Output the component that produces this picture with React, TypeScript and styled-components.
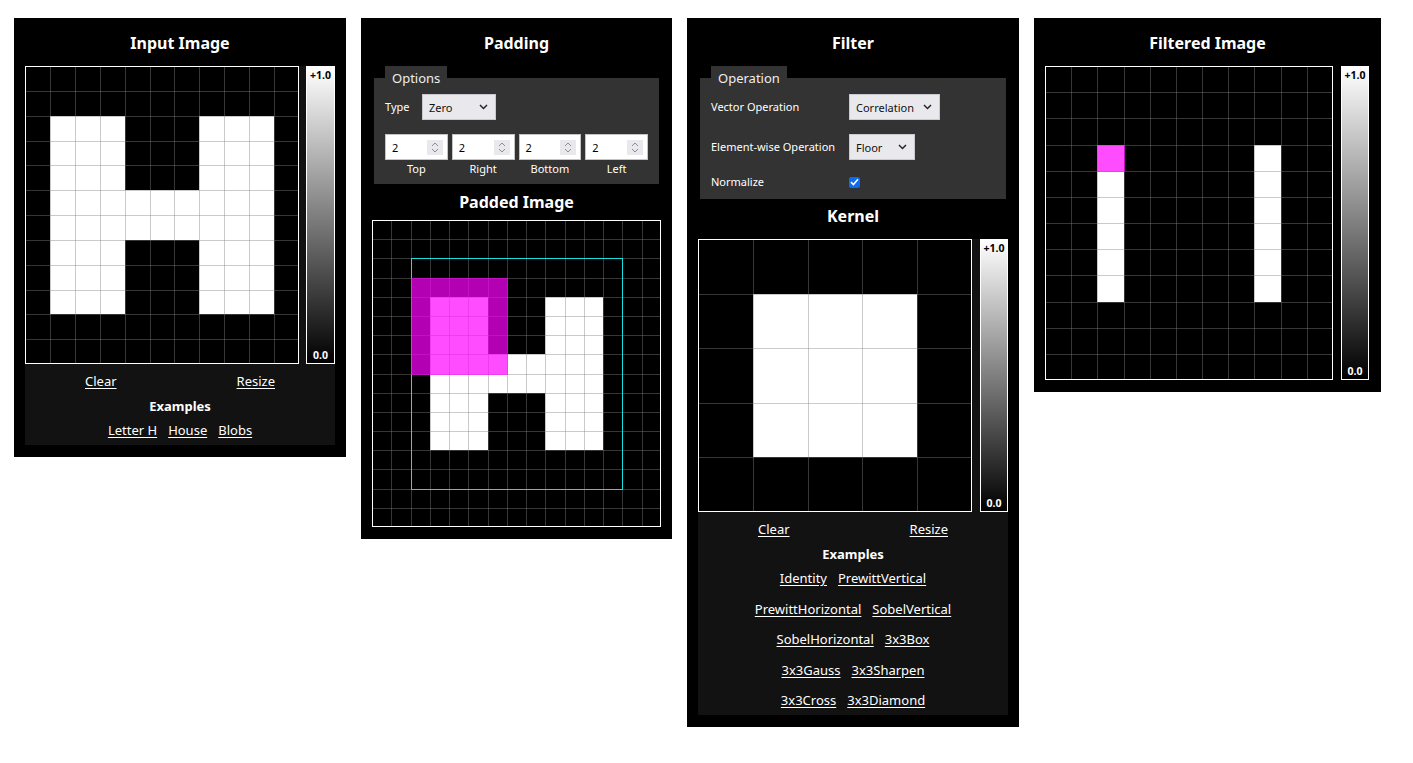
import React from 'react';
import styled, { createGlobalStyle } from 'styled-components';

const FONT = `"Noto Sans", "Open Sans", "DejaVu Sans", sans-serif`;

const GlobalStyle = createGlobalStyle`
  html, body {
    margin: 0;
    padding: 0;
    background: #fff;
  }
  body {
    font-family: ${FONT};
  }
`;

// ---- data ----

const parseRows = (rows: string[]) => rows.map((r) => r.split('').map((ch) => (ch === '#' ? 1 : 0)));

const INPUT = parseRows([
  '...........',
  '...........',
  '.###...###.',
  '.###...###.',
  '.###...###.',
  '.#########.',
  '.#########.',
  '.###...###.',
  '.###...###.',
  '.###...###.',
  '...........',
  '...........',
]);

const KERNEL = parseRows(['.....', '.###.', '.###.', '.###.', '.....']);

const PAD = 2;

const pad = (img: number[][], n: number) => {
  const cols = img[0].length + n * 2;
  const empty = () => new Array(cols).fill(0);
  const out: number[][] = [];
  for (let i = 0; i < n; i++) out.push(empty());
  img.forEach((row) => out.push([...new Array(n).fill(0), ...row, ...new Array(n).fill(0)]));
  for (let i = 0; i < n; i++) out.push(empty());
  return out;
};

const correlate = (img: number[][], k: number[][]) => {
  const kSum = k.flat().reduce((a, b) => a + b, 0) || 1;
  const rows = img.length - k.length + 1;
  const cols = img[0].length - k[0].length + 1;
  const out: number[][] = [];
  for (let r = 0; r < rows; r++) {
    const row: number[] = [];
    for (let c = 0; c < cols; c++) {
      let acc = 0;
      k.forEach((kr, i) => kr.forEach((kv, j) => (acc += kv * img[r + i][c + j])));
      row.push(Math.floor(acc / kSum));
    }
    out.push(row);
  }
  return out;
};

const PADDED = pad(INPUT, PAD);
const FILTERED = correlate(PADDED, KERNEL);

const CURSOR = { row: 3, col: 2 };

// ---- pixel grid drawing ----

interface Rect {
  row: number;
  col: number;
  rows: number;
  cols: number;
}

interface PixelGridProps {
  data: number[][];
  width: number;
  height: number;
  frame?: Rect;
  highlight?: Rect;
}

const GridSvg = styled.svg`
  display: block;
  flex: none;
`;

const PixelGrid = ({ data, width, height, frame, highlight }: PixelGridProps) => {
  const rows = data.length;
  const cols = data[0].length;
  const xs = Array.from({ length: cols + 1 }, (_, i) => Math.round((i * width) / cols));
  const ys = Array.from({ length: rows + 1 }, (_, i) => Math.round((i * height) / rows));
  const box = (r: Rect) => ({
    x: xs[r.col],
    y: ys[r.row],
    w: xs[r.col + r.cols] - xs[r.col],
    h: ys[r.row + r.rows] - ys[r.row],
  });

  return (
    <GridSvg width={width} height={height} viewBox={`0 0 ${width} ${height}`}>
      {data.map((row, r) =>
        row.map((v, c) => {
          const g = Math.round(v * 255);
          return (
            <rect
              key={`${r}-${c}`}
              x={xs[c]}
              y={ys[r]}
              width={xs[c + 1] - xs[c]}
              height={ys[r + 1] - ys[r]}
              fill={`rgb(${g},${g},${g})`}
            />
          );
        }),
      )}
      {xs.slice(1, -1).map((x) => (
        <line key={`v${x}`} x1={x + 0.5} x2={x + 0.5} y1={0} y2={height} stroke="rgba(128,128,128,0.42)" />
      ))}
      {ys.slice(1, -1).map((y) => (
        <line key={`h${y}`} x1={0} x2={width} y1={y + 0.5} y2={y + 0.5} stroke="rgba(128,128,128,0.42)" />
      ))}
      {frame && (() => {
        const b = box(frame);
        return <rect x={b.x + 0.5} y={b.y + 0.5} width={b.w} height={b.h} fill="none" stroke="#16e0e0" />;
      })()}
      {highlight && (() => {
        const b = box(highlight);
        return <rect x={b.x} y={b.y} width={b.w + 1} height={b.h + 1} fill="rgba(255,0,255,0.7)" />;
      })()}
      <rect x={0.5} y={0.5} width={width - 1} height={height - 1} fill="none" stroke="#fff" />
    </GridSvg>
  );
};

// ---- layout ----

const Page = styled.div`
  display: flex;
  align-items: flex-start;
  gap: 15px;
  padding: 18px 0 0 14px;
`;

const Panel = styled.section<{ $width: number }>`
  box-sizing: border-box;
  width: ${({ $width }) => $width}px;
  background: #000;
  color: #fff;
  padding: 13px 11px 12px;
  display: flex;
  flex-direction: column;
`;

const Title = styled.div<{ $top?: number; $bottom?: number }>`
  font-family: ${FONT};
  font-weight: 700;
  font-size: 16px;
  line-height: 24px;
  text-align: center;
  color: #fff;
  margin-top: ${({ $top }) => $top ?? 0}px;
  margin-bottom: ${({ $bottom }) => $bottom ?? 11}px;
`;

const ImageCard = styled.div<{ $shaded?: boolean }>`
  background: ${({ $shaded }) => ($shaded ? '#121212' : 'transparent')};
  display: flex;
  flex-direction: column;
  padding-bottom: ${({ $shaded }) => ($shaded ? 6 : 0)}px;
`;

const ImageRow = styled.div<{ $gap?: number }>`
  display: flex;
  align-items: flex-start;
  gap: ${({ $gap }) => $gap ?? 8}px;
`;

const ColorBar = styled.div<{ $height: number; $width?: number }>`
  box-sizing: border-box;
  width: ${({ $width }) => $width ?? 28}px;
  height: ${({ $height }) => $height}px;
  border: 1px solid #fff;
  background: linear-gradient(to bottom, #fff 0%, #000 100%);
  display: flex;
  flex-direction: column;
  justify-content: space-between;
  align-items: center;
  padding: 2px 0 1px;
  font-family: ${FONT};
  font-weight: 700;
  font-size: 10.5px;
  line-height: 13px;
`;

const BarLabel = styled.span<{ $dark?: boolean }>`
  color: ${({ $dark }) => ($dark ? '#000' : '#fff')};
`;

const ActionRow = styled.div`
  display: flex;
  justify-content: space-around;
  padding-top: 8px;
`;

const TextLink = styled.a`
  font-family: ${FONT};
  font-size: 13px;
  line-height: 18px;
  color: #fff;
  text-decoration: underline;
  text-underline-offset: 2px;
  cursor: pointer;
`;

const ExamplesTitle = styled.div`
  font-family: ${FONT};
  font-weight: 700;
  font-size: 13px;
  line-height: 18px;
  text-align: center;
  margin-top: 7px;
`;

const ExampleList = styled.div`
  display: flex;
  flex-direction: column;
  gap: 12.5px;
  margin-top: 6px;
`;

const ExampleRow = styled.div`
  display: flex;
  justify-content: center;
  gap: 11px;
`;

// ---- option boxes ----

const OptionBox = styled.fieldset`
  margin: 0 2px;
  min-inline-size: 0;
  border: none;
  background: #333;
  padding: 0 11px 0;
  display: flex;
  flex-direction: column;
`;

const OptionLegend = styled.legend`
  background: #333;
  padding: 0 7px;
  font-family: ${FONT};
  font-size: 13px;
  line-height: 24px;
  color: #eee;
`;

const FieldRow = styled.div<{ $top: number }>`
  display: flex;
  align-items: center;
  margin-top: ${({ $top }) => $top}px;
`;

const FieldLabel = styled.span<{ $width: number }>`
  width: ${({ $width }) => $width}px;
  flex: none;
  font-family: ${FONT};
  font-size: 11px;
  line-height: 16px;
  color: #fff;
`;

const SelectBox = styled.div<{ $width: number }>`
  box-sizing: border-box;
  width: ${({ $width }) => $width}px;
  height: 26px;
  display: flex;
  align-items: center;
  justify-content: space-between;
  padding: 0 7px 0 6px;
  background: #e9e9ed;
  border: 1px solid #c9c9cf;
  font-family: ${FONT};
  font-size: 11px;
  color: #111;
`;

const Chevron = () => (
  <svg width="9" height="6" viewBox="0 0 9 6">
    <polyline points="1,1 4.5,4.6 8,1" fill="none" stroke="#222" strokeWidth="1.4" />
  </svg>
);

const PaddingGrid = styled.div`
  display: grid;
  grid-template-columns: repeat(4, 1fr);
  gap: 4px;
  margin-top: 14px;
  padding-bottom: 7px;
`;

const PaddingField = styled.div`
  display: flex;
  flex-direction: column;
  align-items: stretch;
`;

const NumberBox = styled.div`
  box-sizing: border-box;
  height: 26px;
  display: flex;
  align-items: center;
  justify-content: space-between;
  padding: 0 4px 0 6px;
  background: #fff;
  border: 1px solid #c4c4c4;
  font-family: ${FONT};
  font-size: 11px;
  color: #000;
`;

const Spinner = styled.span`
  width: 16px;
  height: 15px;
  background: #e9e9ed;
  display: flex;
  align-items: center;
  justify-content: center;
`;

const SpinGlyph = () => (
  <svg width="8" height="11" viewBox="0 0 8 11">
    <polyline points="1,4 4,1 7,4" fill="none" stroke="#8d8d8d" strokeWidth="1" />
    <polyline points="1,7 4,10 7,7" fill="none" stroke="#8d8d8d" strokeWidth="1" />
  </svg>
);

const FieldCaption = styled.span`
  font-family: ${FONT};
  font-size: 11px;
  line-height: 16px;
  text-align: center;
  color: #fff;
  margin-top: 1px;
`;

const CheckBox = styled.span`
  width: 11px;
  height: 11px;
  border-radius: 2px;
  background: #0a6cf0;
  display: flex;
  align-items: center;
  justify-content: center;
`;

const FilterBody = styled.div`
  display: flex;
  flex-direction: column;
  padding-bottom: 9px;
`;

// ---- panels ----

const PADDING_SIDES = ['Top', 'Right', 'Bottom', 'Left'];

const KERNEL_EXAMPLES = [
  ['Identity', 'PrewittVertical'],
  ['PrewittHorizontal', 'SobelVertical'],
  ['SobelHorizontal', '3x3Box'],
  ['3x3Gauss', '3x3Sharpen'],
  ['3x3Cross', '3x3Diamond'],
];

const App = () => {
  return (
    <>
      <GlobalStyle />
      <Page>
        <Panel $width={332}>
          <Title>Input Image</Title>
          <ImageCard $shaded>
            <ImageRow $gap={7}>
              <PixelGrid data={INPUT} width={274} height={298} />
              <ColorBar $height={298} $width={29}>
                <BarLabel $dark>+1.0</BarLabel>
                <BarLabel>0.0</BarLabel>
              </ColorBar>
            </ImageRow>
            <ActionRow>
              <TextLink>Clear</TextLink>
              <TextLink>Resize</TextLink>
            </ActionRow>
            <ExamplesTitle>Examples</ExamplesTitle>
            <ExampleList>
              <ExampleRow>
                <TextLink>Letter H</TextLink>
                <TextLink>House</TextLink>
                <TextLink>Blobs</TextLink>
              </ExampleRow>
            </ExampleList>
          </ImageCard>
        </Panel>

        <Panel $width={311}>
          <Title>Padding</Title>
          <OptionBox>
            <OptionLegend>Options</OptionLegend>
            <FieldRow $top={4}>
              <FieldLabel $width={37}>Type</FieldLabel>
              <SelectBox $width={74}>
                <span>Zero</span>
                <Chevron />
              </SelectBox>
            </FieldRow>
            <PaddingGrid>
              {PADDING_SIDES.map((side) => (
                <PaddingField key={side}>
                  <NumberBox>
                    <span>{PAD}</span>
                    <Spinner>
                      <SpinGlyph />
                    </Spinner>
                  </NumberBox>
                  <FieldCaption>{side}</FieldCaption>
                </PaddingField>
              ))}
            </PaddingGrid>
          </OptionBox>
          <Title $top={6} $bottom={6}>
            Padded Image
          </Title>
          <PixelGrid
            data={PADDED}
            width={289}
            height={307}
            frame={{ row: PAD, col: PAD, rows: INPUT.length, cols: INPUT[0].length }}
            highlight={{ row: CURSOR.row, col: CURSOR.col, rows: KERNEL.length, cols: KERNEL[0].length }}
          />
        </Panel>

        <Panel $width={332}>
          <Title>Filter</Title>
          <OptionBox>
            <OptionLegend>Operation</OptionLegend>
            <FilterBody>
              <FieldRow $top={4}>
                <FieldLabel $width={138}>Vector Operation</FieldLabel>
                <SelectBox $width={91}>
                  <span>Correlation</span>
                  <Chevron />
                </SelectBox>
              </FieldRow>
              <FieldRow $top={14}>
                <FieldLabel $width={138}>Element-wise Operation</FieldLabel>
                <SelectBox $width={66}>
                  <span>Floor</span>
                  <Chevron />
                </SelectBox>
              </FieldRow>
              <FieldRow $top={14}>
                <FieldLabel $width={138}>Normalize</FieldLabel>
                <CheckBox>
                  <svg width="9" height="8" viewBox="0 0 9 8">
                    <polyline points="1,4.2 3.4,6.5 8,1.3" fill="none" stroke="#fff" strokeWidth="1.6" />
                  </svg>
                </CheckBox>
              </FieldRow>
            </FilterBody>
          </OptionBox>
          <Title $top={5}>Kernel</Title>
          <ImageCard $shaded>
            <ImageRow>
              <PixelGrid data={KERNEL} width={274} height={273} />
              <ColorBar $height={273}>
                <BarLabel $dark>+1.0</BarLabel>
                <BarLabel>0.0</BarLabel>
              </ColorBar>
            </ImageRow>
            <ActionRow>
              <TextLink>Clear</TextLink>
              <TextLink>Resize</TextLink>
            </ActionRow>
            <ExamplesTitle>Examples</ExamplesTitle>
            <ExampleList>
              {KERNEL_EXAMPLES.map((pair) => (
                <ExampleRow key={pair[0]}>
                  {pair.map((name) => (
                    <TextLink key={name}>{name}</TextLink>
                  ))}
                </ExampleRow>
              ))}
            </ExampleList>
          </ImageCard>
        </Panel>

        <Panel $width={347}>
          <Title>Filtered Image</Title>
          <ImageCard>
            <ImageRow>
              <PixelGrid
                data={FILTERED}
                width={288}
                height={314}
                highlight={{ row: CURSOR.row, col: CURSOR.col, rows: 1, cols: 1 }}
              />
              <ColorBar $height={314}>
                <BarLabel $dark>+1.0</BarLabel>
                <BarLabel>0.0</BarLabel>
              </ColorBar>
            </ImageRow>
          </ImageCard>
        </Panel>
      </Page>
    </>
  );
};

export default App;
